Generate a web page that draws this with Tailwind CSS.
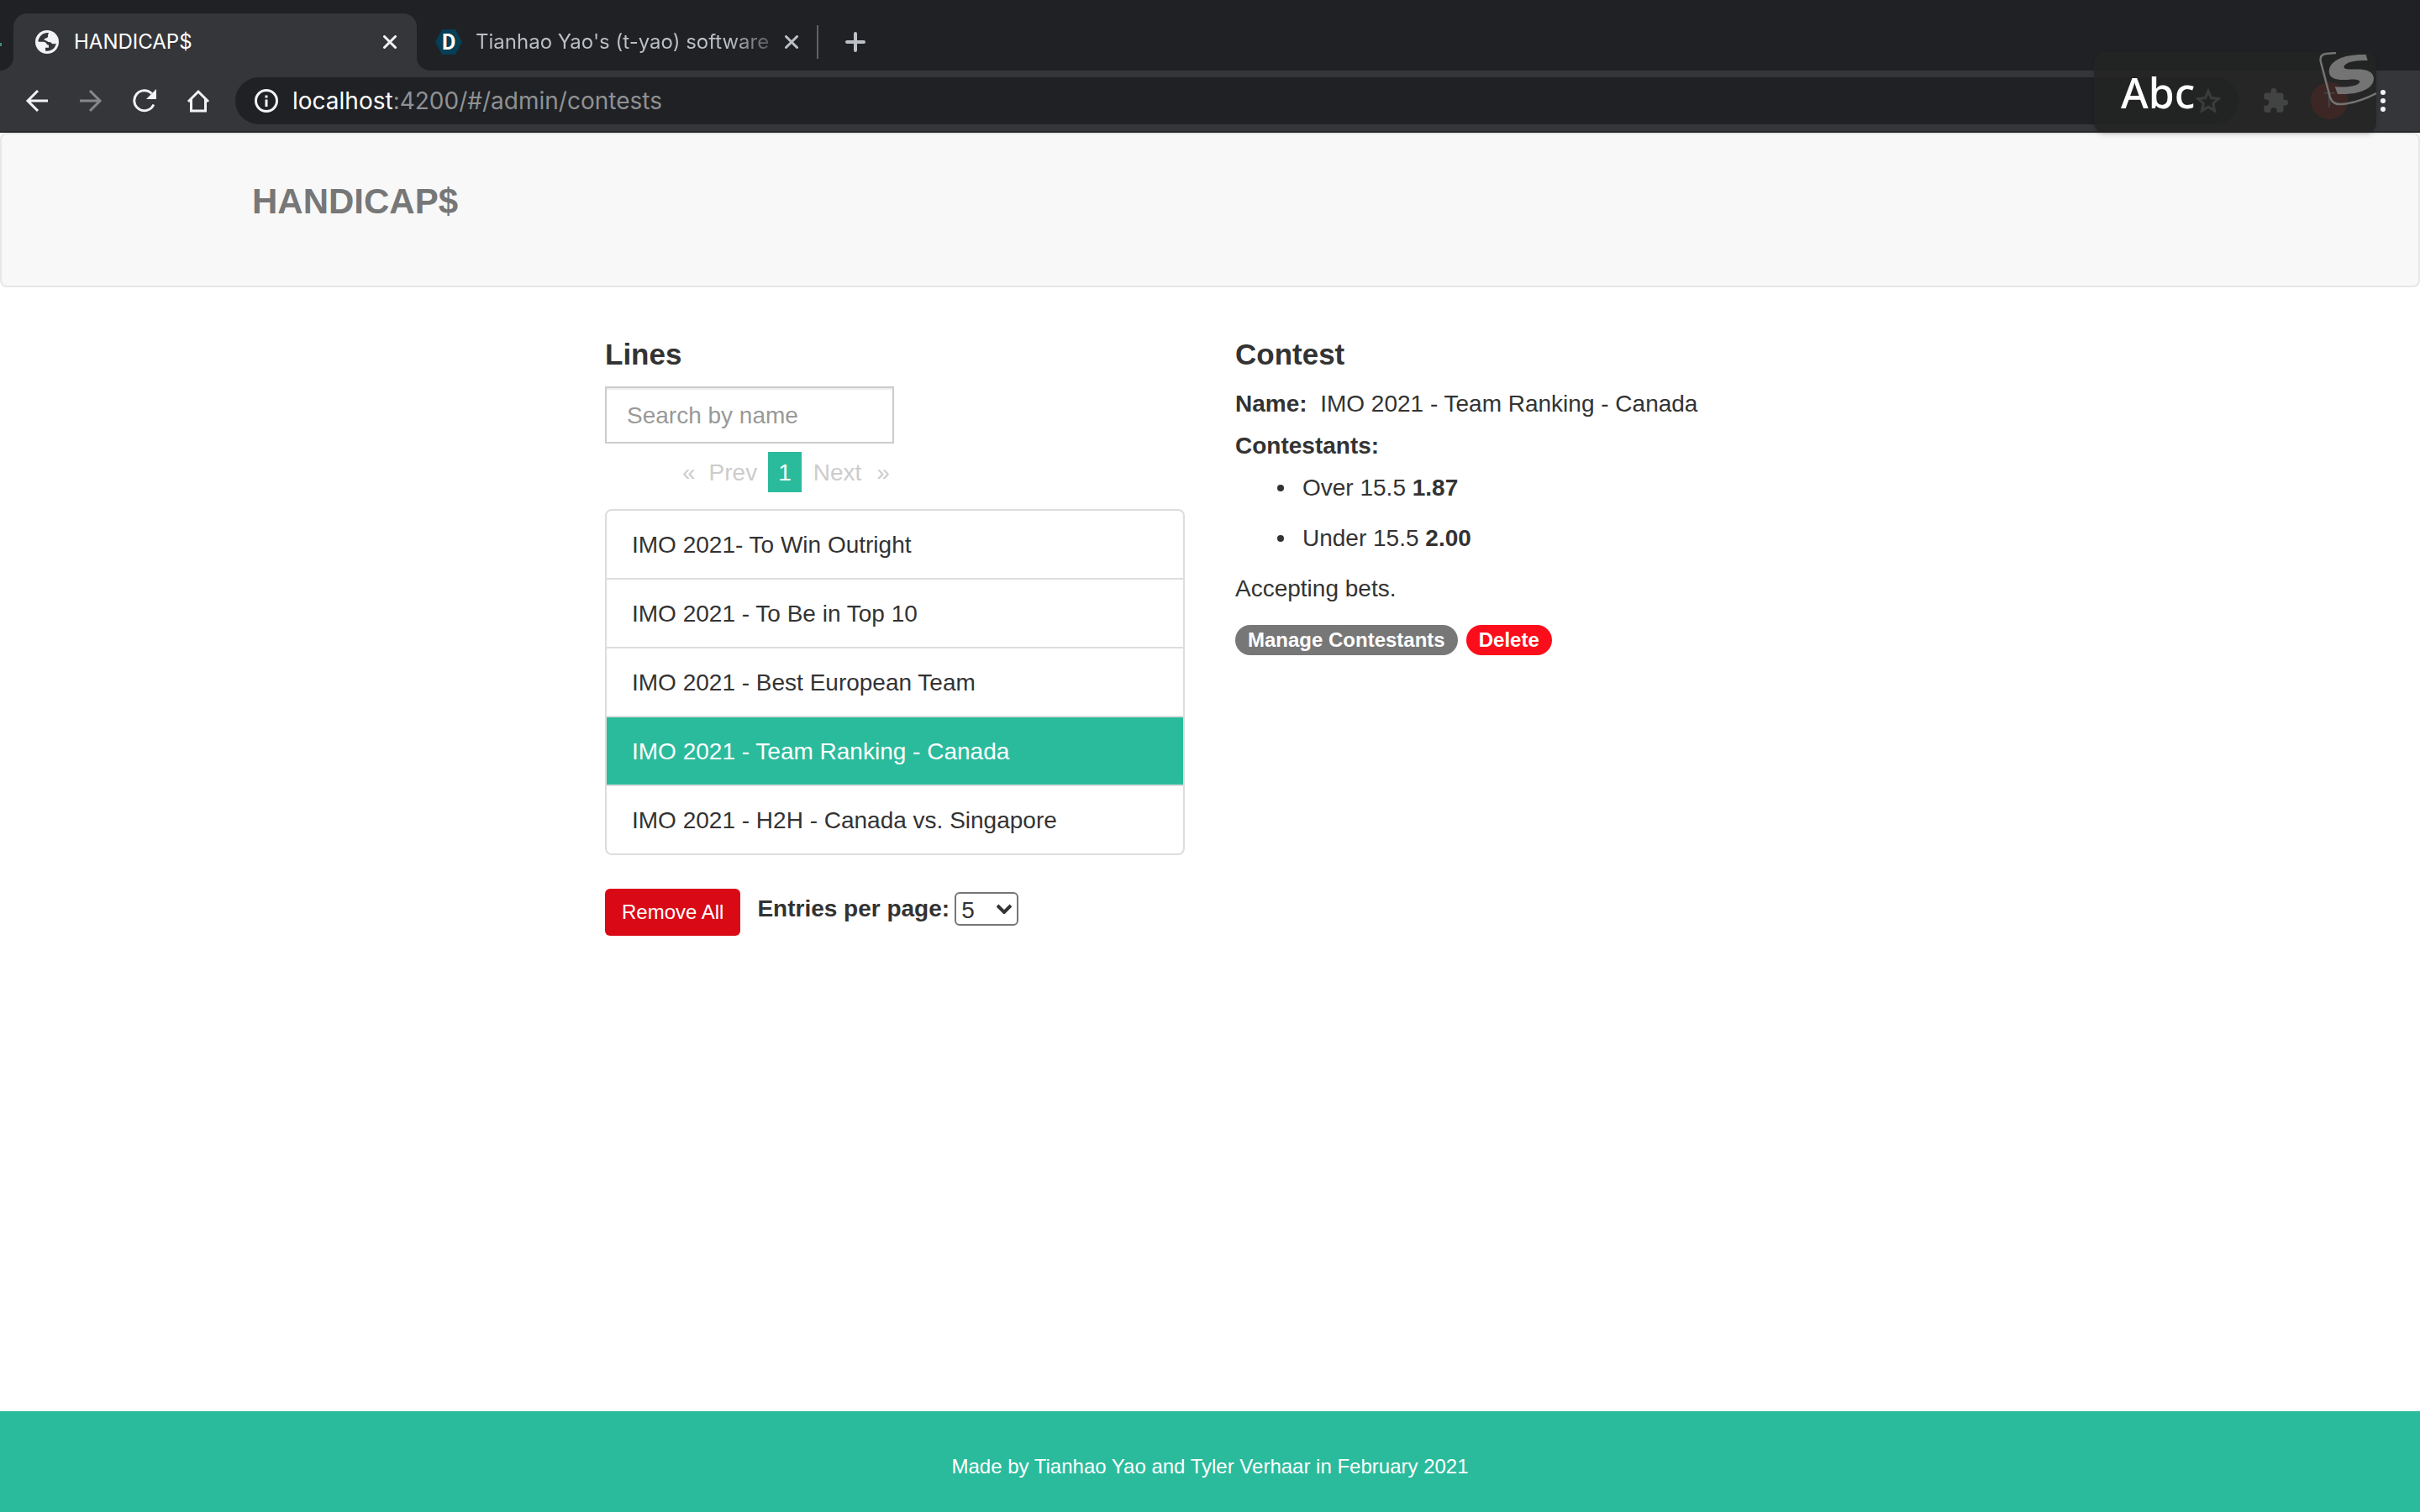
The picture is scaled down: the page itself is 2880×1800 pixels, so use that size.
<!DOCTYPE html>
<html lang="en">

<head>
  <meta charset="UTF-8">
  <meta name="viewport" content="width=device-width, initial-scale=1.0">
  <title>HANDICAP$</title>
  <script src="https://cdn.jsdelivr.net/npm/@tailwindcss/browser@4"></script>
</head>

<body class="min-h-screen flex flex-col bg-white text-[#333] text-[28px] leading-10 font-['Liberation_Sans',Arial,sans-serif]">

  <!-- Browser tabs -->
  <div class="relative h-[84px] bg-[#202124] flex items-end text-[24px] leading-8 font-[Inter,sans-serif]">
    <span class="absolute left-0 top-[51px] w-[2px] h-1 bg-[#3f8f7c]"></span>
    <div class="w-4 h-[68px] shrink-0 bg-[#35363a]">
      <div class="h-full bg-[#202124] rounded-br-2xl"></div>
    </div>
    <div class="w-[480px] h-[68px] shrink-0 bg-[#35363a] rounded-t-2xl flex items-center pl-[26px] pr-6">
      <svg class="w-7 h-7 shrink-0" viewBox="0 0 28 28">
        <circle cx="14" cy="14" r="14" fill="#f1f3f4" />
        <path d="M16 3.200C10 2.500 4.500 6.500 3.300 13.500c2.500.8 5.500-.2 8.200.8 2.500 1 1.500 3 4.500 3.500v3h-4v3.600c6 1.200 12-2.400 12.800-9-2 1.200-4 1.200-5.300 0-1.300-1.600-2.500-1.400-4.300-1.400-1.500-2-4.200-1.500-4.700-3 .3-1.800 4-1.300 4.500-3.300.2-1.700 0-3.300 1-4.500z" fill="#35363a" />
      </svg>
      <span class="ml-[18px] flex-1 text-white">HANDICAP$</span>
      <button aria-label="Close tab"><svg class="w-4 h-4" viewBox="0 0 16 16" stroke="#f1f3f4" stroke-width="3" stroke-linecap="round"><path d="M1.500 1.500l13 13M14.500 1.500l-13 13" /></svg></button>
    </div>
    <div class="flex-1 h-[68px] bg-[#35363a]">
      <div class="h-full bg-[#202124] rounded-bl-2xl flex items-center pl-[22px]">
        <svg class="w-8 h-[30px] shrink-0" viewBox="0 0 32 30">
          <path d="M8 0h16l8 15-8 15H8L0 15z" fill="#063f56" />
          <text x="16" y="24" text-anchor="middle" font-size="25" font-weight="700" font-family="Roboto, sans-serif" fill="#fff">D</text>
        </svg>
        <span class="ml-4 w-[356px] whitespace-nowrap bg-linear-to-r from-[#bdc1c6] from-85% to-[#4a4c50] bg-clip-text text-transparent">Tianhao Yao's (t-yao) software</span>
        <button class="ml-3" aria-label="Close tab"><svg class="w-4 h-4" viewBox="0 0 16 16" stroke="#bdc1c6" stroke-width="3" stroke-linecap="round"><path d="M1.500 1.500l13 13M14.500 1.500l-13 13" /></svg></button>
        <span class="ml-[22px] w-[2px] h-10 bg-[#5f6165]"></span>
        <button class="ml-8" aria-label="New tab"><svg class="w-6 h-6" viewBox="0 0 24 24" stroke="#bdc1c6" stroke-width="4" stroke-linecap="round"><path d="M12 2v20M2 12h20" /></svg></button>
      </div>
    </div>
  </div>

  <!-- Browser toolbar -->
  <div class="relative h-[74px] bg-[#35363a] border-b-2 border-[#27282b] flex items-center font-[Inter,sans-serif]">
    <button class="ml-[30px]" aria-label="Back"><svg class="w-7 h-7" viewBox="0 0 28 28" fill="none" stroke="#f1f3f4" stroke-width="3"><path d="M27 14H3M15 2L3 14l12 12" /></svg></button>
    <button class="ml-9" aria-label="Forward"><svg class="w-7 h-7" viewBox="0 0 28 28" fill="none" stroke="#86878a" stroke-width="3"><path d="M1 14h24M13 2l12 12-12 12" /></svg></button>
    <button class="ml-9" aria-label="Reload"><svg class="w-7 h-7" viewBox="0 0 28 28" fill="none" stroke="#f1f3f4" stroke-width="3"><path d="M24.800 18.500A12 12 0 1 1 22.500 5.500" /><path d="M28 0v12H16z" fill="#f1f3f4" stroke="none" /></svg></button>
    <button class="ml-9" aria-label="Home"><svg class="w-7 h-7" viewBox="0 0 28 28" fill="none" stroke="#f1f3f4" stroke-width="3"><path d="M2 15L14 3l12 12M5.500 12v14h17V12" /></svg></button>
    <div class="ml-[30px] mr-[216px] flex-1 h-14 rounded-full bg-[#202124] flex items-center pl-[23px]">
      <svg class="w-7 h-7 shrink-0" viewBox="0 0 28 28" fill="none" stroke="#f1f3f4" stroke-width="3"><circle cx="14" cy="14" r="12.500" /><path d="M14 12.500v8.500M14 7.500v3" /></svg>
      <span class="ml-[17px] flex-1 text-[#8f9194]"><span class="text-white">localhost</span>:4200/#/admin/contests</span>
      <button class="mr-[21px]" aria-label="Bookmark"><svg class="w-[30px] h-[30px]" viewBox="0 0 30 30" fill="none" stroke="#c4c7ca" stroke-width="3"><path d="M15 3.500l3.500 8.100 8.800.8-6.700 5.800 2 8.600L15 22.300l-7.600 4.500 2-8.600-6.700-5.800 8.800-.8z" /></svg></button>
    </div>

    <!-- Extensions and profile -->
    <div class="absolute right-10 top-[14px] flex items-center">
      <svg class="w-[30px] h-[30px] mr-[27px]" viewBox="1 1 22 22" fill="#f1f3f4"><path d="M20.500 11H19V7c0-1.100-.9-2-2-2h-4V3.500a2.500 2.500 0 0 0-5 0V5H4c-1.100 0-2 .9-2 2v3.800h1.500a2.700 2.700 0 0 1 0 5.400H2V20c0 1.100.9 2 2 2h3.800v-1.500a2.700 2.700 0 0 1 5.400 0V22H17c1.100 0 2-.9 2-2v-4h1.500a2.500 2.500 0 0 0 0-5z" /></svg>
      <span class="w-11 h-11 mr-[38px] rounded-full bg-[#c7402b] text-white text-[24px] leading-[44px] text-center font-light">T</span>
      <svg class="w-2 h-7" viewBox="0 0 8 28" fill="#f1f3f4"><circle cx="4" cy="4" r="3" /><circle cx="4" cy="14" r="3" /><circle cx="4" cy="24" r="3" /></svg>
    </div>

    <!-- Input method indicator -->
    <div class="absolute right-[52px] -top-[22px] w-[336px] h-24 rounded-xl bg-[#232323]/85 shadow-md pl-8 text-white text-[50px] leading-[96px] font-medium font-['Noto_Sans',sans-serif]">
      Abc
      <svg class="absolute right-0 top-0 w-[68px] h-16" viewBox="0 0 68 64" fill="#737473">
        <path d="M20 1L8 2Q0 3 2 12l11 42q3 9 14 8 20-2 41-13" fill="none" stroke="#737473" stroke-width="2.500" />
        <path d="M55.700 3C35 2 12 8 11.700 23 12 34 26 33.500 38 32.500c8-.5 12 1.500 9.500 4.500-4 4-16 5-28.800 4.300L22 50c23 1 43-5 43-19-1-10-13-11-23-10.500-10 .5-14-.5-12-4.500 4-5 15-6.500 27.700-6z" />
      </svg>
    </div>
  </div>

  <!-- Navbar -->
  <nav class="h-[184px] shrink-0 bg-[#f8f8f8] border-2 border-[#e7e7e7] rounded-lg">
    <div class="max-w-[2280px] mx-auto pt-[60px]">
      <a href="#" class="text-[42px] font-bold text-[#777]">HANDICAP$</a>
    </div>
  </nav>

  <main class="flex-1 w-full max-w-[1500px] mx-auto pt-[60px] grid grid-cols-2">

    <!-- Lines -->
    <section class="px-[30px]">
      <h4 class="mb-[18px] text-[35px] font-bold">Lines</h4>
      <input type="text" placeholder="Search by name" aria-label="Search by name" class="block w-[344px] h-[68px] px-6 pt-[2px] border-2 border-[#ccc] shadow-[inset_0_2px_2px_rgba(0,0,0,0.075)] placeholder:text-[#999]">
      <ul class="mt-[10px] mb-5 pl-20 h-12 flex leading-[50px] text-[#ccc]">
        <li class="pl-3">«</li>
        <li class="pl-4 pr-[13px]">Prev</li>
        <li class="px-3 bg-[#2abb9c] text-white">1</li>
        <li class="pl-[14px] pr-3">Next</li>
        <li class="ml-[6px]">»</li>
      </ul>
      <ul class="border-2 border-[#ddd] rounded-lg divide-y-2 divide-[#ddd]">
        <li class="px-[30px] pt-[21px] pb-[19px]">IMO 2021- To Win Outright</li>
        <li class="px-[30px] pt-[21px] pb-[19px]">IMO 2021 - To Be in Top 10</li>
        <li class="px-[30px] pt-[21px] pb-[19px]">IMO 2021 - Best European Team</li>
        <li class="px-[30px] pt-[21px] pb-[19px] bg-[#2abb9c] text-white">IMO 2021 - Team Ranking - Canada</li>
        <li class="px-[30px] pt-[21px] pb-[19px]">IMO 2021 - H2H - Canada vs. Singapore</li>
      </ul>
      <div class="mt-10 flex items-start">
        <button class="h-14 px-5 rounded-md bg-[#d90916] text-white text-[24px]">Remove All</button>
        <label for="entries" class="ml-5 mt-1 font-bold">Entries per page:</label>
        <div class="relative ml-[6px] mt-1">
          <select id="entries" class="block appearance-none w-[76px] h-10 pl-[6px] border-2 border-[#767676] rounded-md bg-white">
            <option>5</option>
            <option>10</option>
            <option>20</option>
          </select>
          <svg class="absolute right-2 top-[14px] w-[18px] h-3 pointer-events-none" viewBox="0 0 18 12" fill="none" stroke="#333" stroke-width="4"><path d="M1 2l8 8 8-8" /></svg>
        </div>
      </div>
    </section>

    <!-- Contest -->
    <section class="px-[30px]">
      <h4 class="mb-[19px] text-[35px] font-bold">Contest</h4>
      <p class="mb-[10px]"><b>Name:</b>&nbsp; IMO 2021 - Team Ranking - Canada</p>
      <p class="mb-[10px]"><b>Contestants:</b></p>
      <ul class="pl-[50px]">
        <li class="mb-5 flex items-center"><span class="w-2 h-2 mr-[22px] rounded-full bg-[#333]"></span><span>Over 15.5 <b>1.87</b></span></li>
        <li class="mb-5 flex items-center"><span class="w-2 h-2 mr-[22px] rounded-full bg-[#333]"></span><span>Under 15.5 <b>2.00</b></span></li>
      </ul>
      <p class="mb-[23px]">Accepting bets.</p>
      <div class="flex gap-[10px] text-[24px] leading-6 font-bold text-white">
        <button class="px-[15px] py-[6px] rounded-full bg-[#777]">Manage Contestants</button>
        <button class="px-[15px] py-[6px] rounded-full bg-[#fc0d1b]">Delete</button>
      </div>
    </section>

  </main>

  <footer class="h-[120px] shrink-0 pt-[46px] bg-[#2abb9c] text-center text-white text-[24px]">
    Made by Tianhao Yao and Tyler Verhaar in February 2021
  </footer>

</body>

</html>
